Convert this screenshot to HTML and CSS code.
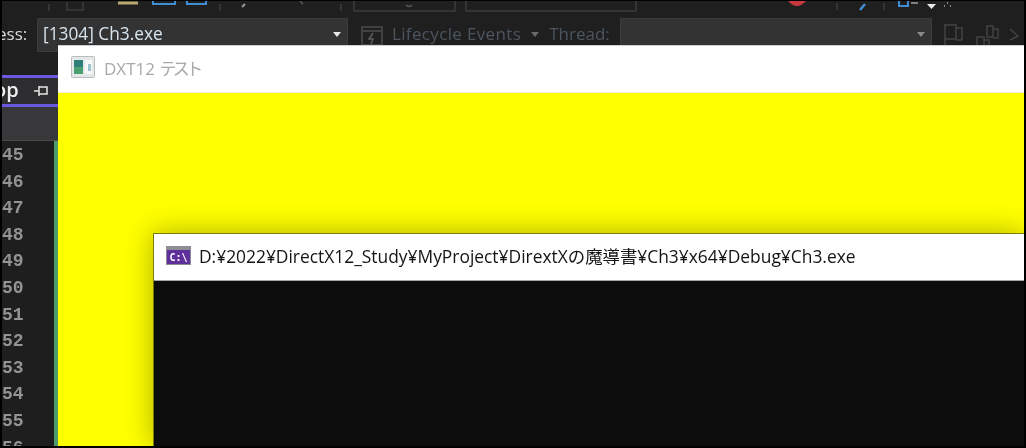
FILE: index.html
```html
<!DOCTYPE html>
<html lang="ja">
<head>
<meta charset="utf-8">
<title>DXT12 テスト</title>
<link rel="stylesheet" href="styles.css">
</head>
<body>
<main class="screen">
  <div class="ide">
    <svg class="toolbar-top" width="1022" height="13" viewBox="0 0 1022 13" fill="none">
      <g stroke="#3c3c3c" stroke-width="1.500">
        <path d="M47 3v7M218 3v7M339 3v7M835 2v7M882 2v7"/>
        <path d="M65 1v8h16V1"/>
        <path d="M352 0v10h101V0M464 0v10h170V0"/>
      </g>
      <path d="M116 2h20" stroke="#b9a96c" stroke-width="3"/>
      <path d="M151 0v3h22V0M185 0v3h19V0" stroke="#3f8ed4" stroke-width="2"/>
      <path d="M240 6l3-3" stroke="#9a9a9a" stroke-width="2"/>
      <path d="M298 0l3 3" stroke="#5a5a5a" stroke-width="1.500"/>
      <path d="M404 4q3 3 6 0" stroke="#5a5a5a" stroke-width="1.500"/>
      <path d="M786 0q9 10 18 0z" fill="#c8383f"/>
      <path d="M858 9l5-6" stroke="#3f8ed4" stroke-width="2.500"/>
      <path d="M897 0v5h9V0" stroke="#3f8ed4" stroke-width="2"/>
      <path d="M909 2h7" stroke="#a0a0a0" stroke-width="1.500"/>
      <path d="M925 3h9l-4.500 5z" fill="#e8e8e8"/>
      <path d="M942 5h1M948 5h1M945 2h1" stroke="#8a8a8a" stroke-width="2"/>
    </svg>
    <div class="toolbar-debug">
      <span class="label label-process">ess:</span>
      <div class="combo combo-process">
        <span class="combo-text">[1304] Ch3.exe</span>
        <span class="arrow"></span>
      </div>
      <svg class="bolt" width="24" height="24" viewBox="0 0 24 24" fill="none" stroke="#4c4c4c" stroke-width="1.500">
        <path d="M2 3h20v18H2zM2 7h20"/>
        <path d="M13 9l-4 6h4l-2 5" stroke="#5e5e5e"/>
      </svg>
      <span class="label label-muted label-life">Lifecycle Events</span>
      <span class="arrow arrow-dim"></span>
      <span class="label label-muted label-thread">Thread:</span>
      <div class="combo combo-thread"><span class="arrow arrow-grey"></span></div>
      <svg class="flags" width="78" height="28" viewBox="0 0 78 28" fill="none" stroke="#434343" stroke-width="1.500">
        <path d="M2 1v26M2 2h11v14H2M13 5h6v12h-6"/>
        <path d="M34 14h7v12h-7zM41 17h5v9h-5M44 3h6v11h-6zM50 6h5v9h-5"/>
        <path d="M67 6l8 7-8 4"/>
      </svg>
    </div>
    <div class="tab-gap"></div>
    <div class="tab-head">
      <span class="tab-title">op</span>
      <svg class="pin" width="14" height="12" viewBox="0 0 14 12" fill="none" stroke="#e6e6e6" stroke-width="1.500">
        <path d="M0 6h5M5 1v10M5 2h8v7H5"/>
      </svg>
    </div>
    <div class="tab-strip"></div>
    <div class="editor">
      <div class="lines">
        <span>45</span><span>46</span><span>47</span><span>48</span><span>49</span><span>50</span><span>51</span><span>52</span><span>53</span><span>54</span><span>55</span><span>56</span>
      </div>
      <div class="changebar"></div>
    </div>
  </div>

  <section class="window window-dx">
    <header class="titlebar titlebar-dx">
      <svg class="app-icon" width="24" height="22" viewBox="0 0 24 22">
        <rect x="0.500" y="0.500" width="23" height="21" rx="1" fill="#e4e8e8" stroke="#b9bcbc"/>
        <rect x="3" y="4" width="9" height="14" fill="#2f7f78"/>
        <rect x="3" y="11" width="9" height="7" fill="#4aa070"/>
        <rect x="14" y="4" width="7" height="14" fill="#f6f8f8"/>
        <rect x="17" y="8" width="3" height="7" fill="#9fc4cf"/>
      </svg>
      <h1 class="title title-dx">DXT12 <span class="title-kana">テスト</span></h1>
    </header>
    <div class="client-yellow"></div>
  </section>

  <section class="window window-console">
    <header class="titlebar titlebar-console">
      <svg class="console-icon" width="25" height="19" viewBox="0 0 25 19">
        <rect width="25" height="19" fill="#8d8d95"/>
        <rect x="1" y="4" width="23" height="14" fill="#5f309c"/>
        <text x="3.500" y="15" class="console-glyph">C:\</text>
      </svg>
      <h2 class="title title-console">D:¥2022¥DirectX12_Study¥MyProject¥DirextXの魔導書¥Ch3¥x64¥Debug¥Ch3.exe</h2>
    </header>
    <div class="client-black"></div>
  </section>
</main>
</body>
</html>
```
FILE: styles.css
```css
* { box-sizing: border-box; margin: 0; padding: 0; }
html, body { width: 1026px; height: 448px; overflow: hidden; background: #000; }
.screen {
  position: relative;
  width: 1026px;
  height: 448px;
  border: solid #000;
  border-width: 1px 2px 2px 2px;
  overflow: hidden;
  background: #1f1f1f;
  font-family: "Open Sans", "Noto Sans CJK JP", sans-serif;
  filter: blur(0.55px);
}
.ide { display: flex; flex-direction: column; height: 100%; background: #1f1f1f; }
.toolbar-top { display: block; flex: none; }
.toolbar-debug { display: flex; align-items: flex-start; height: 58px; flex: none; position: relative; }
.label { font-size: 17px; line-height: 22px; margin-top: 9px; white-space: nowrap; }
.label-process { color: #dcdcdc; width: 35px; margin-left: -5px; margin-right: 4px; }
.label-muted { color: #4b5560; }
.combo {
  height: 34px;
  margin-top: 4px;
  background: #333;
  border: 1px solid #3c3c3c;
  display: flex;
  align-items: center;
  justify-content: space-between;
  flex: none;
}
.combo-process { width: 311px; padding: 0 6px 0 5px; margin-left: 1px; }
.combo-thread { width: 312px; padding: 0 6px 0 0; justify-content: flex-end; margin-left: 10px; }
.combo-text { color: #d8e4ee; font-size: 17.300px; line-height: 22px; white-space: nowrap; margin-top: -3px; }
.arrow { display: block; width: 0; height: 0; border: solid transparent; border-width: 5px 4.500px 0; border-top-color: #e8e8e8; flex: none; margin-top: -2px; }
.arrow-grey { border-top-color: #8a8a8a; }
.arrow-dim { border-top-color: #6a6a6a; margin: 18px 0 0 10px; }
.bolt { margin: 10px 0 0 12px; flex: none; }
.label-life { margin-left: 8px; letter-spacing: .35px; }
.label-thread { margin-left: 10px; }
.flags { margin: 9px 0 0 11px; flex: none; }
.tab-gap { height: 3px; flex: none; }
.tab-head {
  height: 32px;
  width: 56px;
  flex: none;
  background: #2d2d30;
  border: solid #6a58e0;
  border-width: 3px 0;
  display: flex;
  align-items: center;
  justify-content: space-between;
  padding-right: 10px;
}
.tab-title { color: #f0f0f0; font-size: 20px; font-weight: 600; line-height: 22px; margin-left: -8px; margin-top: -3px; }
.pin { flex: none; }
.tab-strip { height: 34px; width: 56px; flex: none; background: #38383a; border-bottom: 1px solid #4a4a4a; }
.editor { flex: 1; width: 56px; display: flex; overflow: hidden; background: #1e1e1e; }
.lines { width: 52px; height: 100%; overflow: hidden; padding-top: 1px; }
.lines span {
  display: block;
  height: 26.600px;
  width: 20px;
  text-align: right;
  color: #939393;
  font: 700 18px/26.600px "Liberation Mono", monospace;
  white-space: nowrap;
}
.changebar { width: 4px; background: #4f9a6c; flex: none; }

.window { position: absolute; right: 0; bottom: 0; display: flex; flex-direction: column; }
.window-dx { left: 56px; top: 44px; border-top: 1px solid #cfcfcf; }
.window-console { left: 151px; top: 232px; border: solid #7d7d00; border-width: 1px 0 0 1px; box-shadow: 0 0 26px rgba(0, 0, 0, .32); }
.titlebar { display: flex; align-items: center; background: #fff; flex: none; }
.titlebar-dx { height: 47px; padding: 0 0 4px 13px; border-bottom: 1px solid #f2f2d0; }
.titlebar-console { height: 47px; padding: 0 0 4px 12px; border-bottom: 1px solid #a8a8a8; }
.title { font-weight: 400; font-size: 17px; white-space: nowrap; }
.title-dx { color: #a9a9a9; margin-left: 9px; }
.title-kana { letter-spacing: -3.500px; font-size: 17px; }
.title-console { color: #141414; margin-left: 8px; font-size: 17.400px; }
.console-icon { flex: none; }
.app-icon { flex: none; }
.console-glyph { fill: #fff; font: 700 10px "DejaVu Sans Mono", monospace; }
.client-yellow { flex: 1; background: #ff0; }
.client-black { flex: 1; background: #0c0c0c; }
```
